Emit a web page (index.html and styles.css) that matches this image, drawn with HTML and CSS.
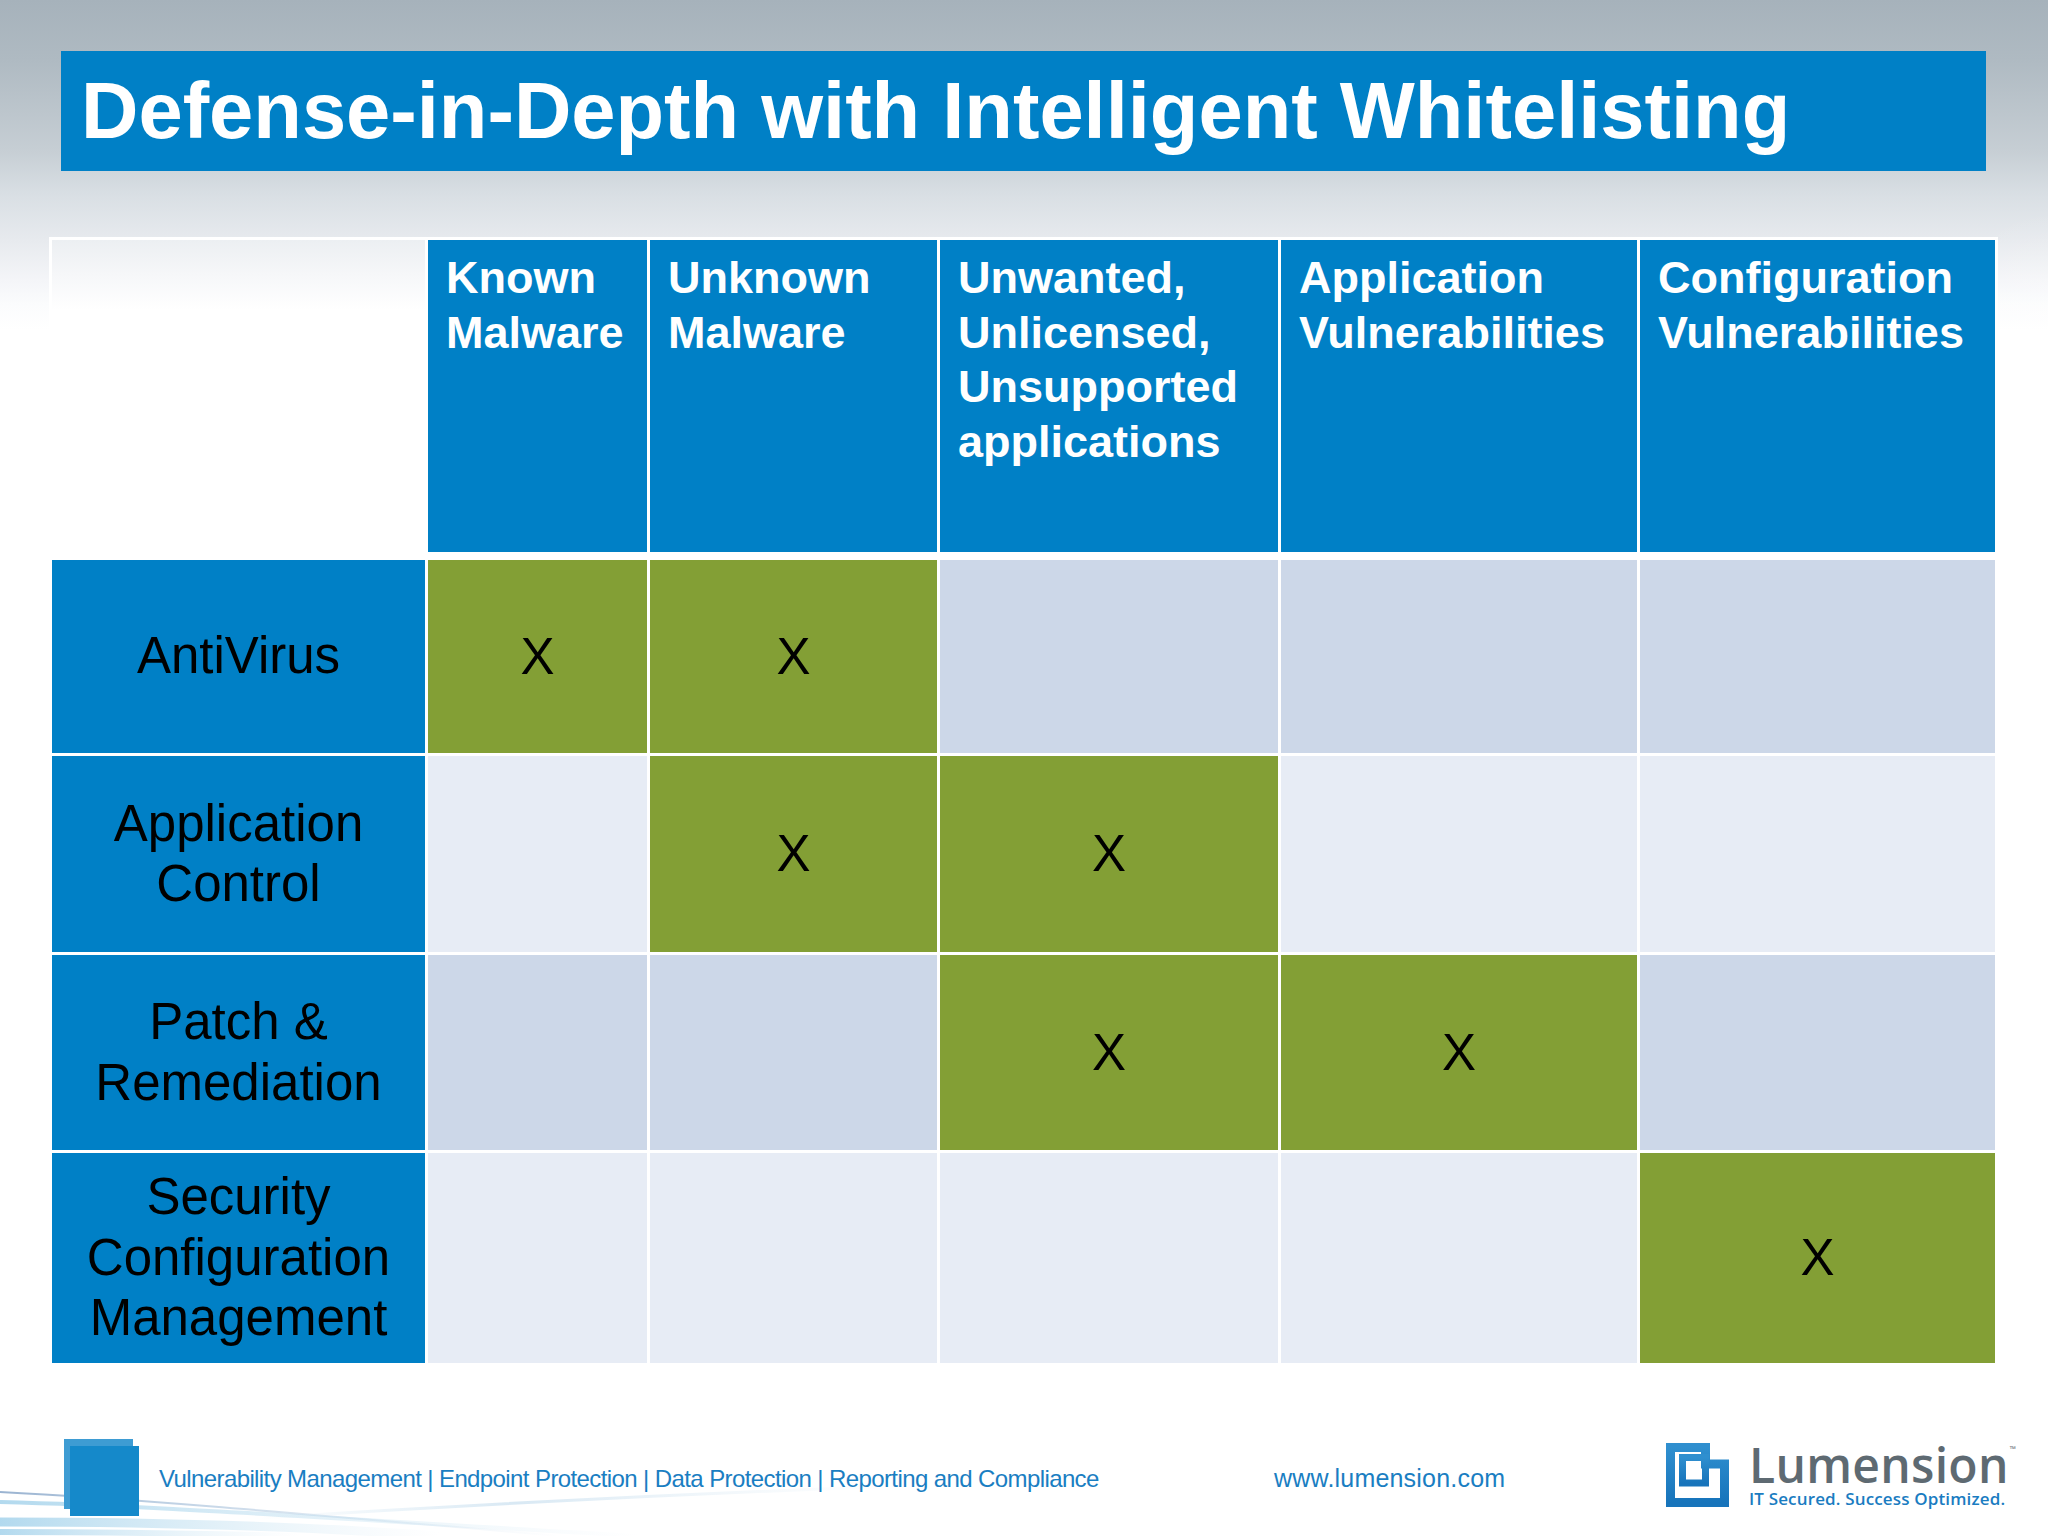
FILE: index.html
```html
<!DOCTYPE html>
<html lang="en">
<head>
<meta charset="utf-8">
<title>Defense-in-Depth with Intelligent Whitelisting</title>
<link rel="stylesheet" href="styles.css">
</head>
<body>
<div class="slide">
  <svg class="swoosh" width="900" height="80" viewBox="0 0 900 80" aria-hidden="true">
    <defs>
      <linearGradient id="sw1" x1="0" y1="0" x2="1" y2="0">
        <stop offset="0" stop-color="#6f93bd" stop-opacity="0.7"/>
        <stop offset="1" stop-color="#9ec3e0" stop-opacity="0"/>
      </linearGradient>
      <linearGradient id="sw2" x1="0" y1="0" x2="1" y2="0">
        <stop offset="0" stop-color="#9fd0ea" stop-opacity="0.8"/>
        <stop offset="1" stop-color="#cfe6f3" stop-opacity="0"/>
      </linearGradient>
      <linearGradient id="sw3" x1="0" y1="0" x2="1" y2="0">
        <stop offset="0" stop-color="#d6e8f3" stop-opacity="0"/>
        <stop offset="0.4" stop-color="#cfe3f1" stop-opacity="0.8"/>
        <stop offset="1" stop-color="#e6f0f7" stop-opacity="0"/>
      </linearGradient>
    </defs>
    <path d="M0 36 C 120 42, 260 54, 560 80" fill="none" stroke="url(#sw1)" stroke-width="2"/>
    <path d="M0 46 C 160 50, 320 62, 640 80" fill="none" stroke="url(#sw2)" stroke-width="4"/>
    <path d="M0 66 C 150 66, 300 70, 440 80" fill="none" stroke="url(#sw2)" stroke-width="9"/>
    <path d="M0 76 C 120 76, 220 78, 300 80" fill="none" stroke="url(#sw2)" stroke-width="6"/>
    <path d="M260 62 C 480 48, 680 38, 900 30" fill="none" stroke="url(#sw3)" stroke-width="3"/>
  </svg>

  <div class="title-bar">
    <h1>Defense-in-Depth with Intelligent Whitelisting</h1>
  </div>

  <div class="matrix">
    <div class="mhead">
      <div class="corner"></div>
      <div class="hcell">Known<br>Malware</div>
      <div class="hcell">Unknown<br>Malware</div>
      <div class="hcell">Unwanted,<br>Unlicensed,<br>Unsupported<br>applications</div>
      <div class="hcell">Application<br>Vulnerabilities</div>
      <div class="hcell">Configuration<br>Vulnerabilities</div>
    </div>
    <div class="mbody">
      <div class="rhead">AntiVirus</div>
      <div class="cell hit">X</div>
      <div class="cell hit">X</div>
      <div class="cell band1"></div>
      <div class="cell band1"></div>
      <div class="cell band1"></div>

      <div class="rhead">Application<br>Control</div>
      <div class="cell band2"></div>
      <div class="cell hit">X</div>
      <div class="cell hit">X</div>
      <div class="cell band2"></div>
      <div class="cell band2"></div>

      <div class="rhead">Patch &amp;<br>Remediation</div>
      <div class="cell band1"></div>
      <div class="cell band1"></div>
      <div class="cell hit">X</div>
      <div class="cell hit">X</div>
      <div class="cell band1"></div>

      <div class="rhead">Security<br>Configuration<br>Management</div>
      <div class="cell band2"></div>
      <div class="cell band2"></div>
      <div class="cell band2"></div>
      <div class="cell band2"></div>
      <div class="cell hit">X</div>
    </div>
  </div>

  <footer class="footer">
    <div class="fbox"></div>
    <div class="ftext">Vulnerability Management | Endpoint Protection | Data Protection | Reporting and Compliance</div>
    <div class="fweb">www.lumension.com</div>
    <div class="flogo">
      <svg class="flogo-icon" width="63" height="64" viewBox="0 0 63 64" aria-hidden="true">
        <defs>
          <linearGradient id="lg" x1="0" y1="0" x2="0" y2="1">
            <stop offset="0" stop-color="#2f8fcf"/>
            <stop offset="1" stop-color="#1774bb"/>
          </linearGradient>
        </defs>
        <path d="M4.5 4.5 H39.5 V21 H58.5 V59.5 H4.5 Z" fill="none" stroke="url(#lg)" stroke-width="9" stroke-linejoin="miter"/>
        <rect x="16.5" y="14.5" width="23" height="25.5" fill="none" stroke="url(#lg)" stroke-width="7"/>
      </svg>
      <div class="flogo-text">
        <div class="brand">Lumension<span class="tm">™</span></div>
        <div class="tagline">IT Secured. Success Optimized.</div>
      </div>
    </div>
  </footer>
</div>
</body>
</html>
```

FILE: styles.css
```css
html, body {
  margin: 0;
  padding: 0;
}

body {
  width: 2048px;
  height: 1536px;
  overflow: hidden;
  font-family: "Liberation Sans", Arial, sans-serif;
  background:
    radial-gradient(ellipse 140px 220px at 100% 28%, rgba(255, 255, 255, 0.55), rgba(255, 255, 255, 0) 100%),
    linear-gradient(180deg, #a6b2bb 0px, #afbac2 60px, #c6ced4 150px, #d9dfe4 195px, #e7eaee 240px, #f4f5f8 280px, #fbfcfd 305px, #ffffff 330px);
}

.slide {
  position: relative;
  width: 2048px;
  height: 1536px;
  display: flex;
  flex-direction: column;
}

/* Title */
.title-bar {
  margin: 51px 0 0 61px;
  width: 1925px;
  height: 120px;
  background: #0080c6;
}

.title-bar h1 {
  margin: 0;
  padding-left: 20px;
  font-size: 79.5px;
  line-height: 120px;
  font-weight: 700;
  color: #ffffff;
  white-space: nowrap;
}

/* Matrix */
.matrix {
  margin: 66px 0 0 49px;
  width: 1949px;
  box-sizing: border-box;
  padding: 3px;
  background: #ffffff;
  display: flex;
  flex-direction: column;
  gap: 8px;
}

.mhead,
.mbody {
  display: grid;
  grid-template-columns: 373px 219px 287px 338px 356px 355px;
  column-gap: 3px;
}

.mhead {
  height: 312px;
}

.mbody {
  grid-template-rows: 193px 196px 195px 210px;
  row-gap: 3px;
}

.corner {
  background: linear-gradient(180deg, #eceff2 0px, #f6f7f9 35px, #ffffff 70px);
}

.hcell {
  background: #0080c6;
  color: #ffffff;
  font-weight: 700;
  font-size: 45px;
  line-height: 54.5px;
  padding: 11px 8px 0 18px;
  white-space: nowrap;
}

.rhead {
  background: #0080c6;
  color: #000000;
  font-size: 51px;
  line-height: 60.5px;
  display: flex;
  align-items: center;
  justify-content: center;
  text-align: center;
}

.cell {
  display: flex;
  align-items: center;
  justify-content: center;
  font-size: 51px;
  line-height: 60px;
  color: #000000;
}

.hit {
  background: #839f35;
}

.band1 {
  background: #ccd7e8;
}

.band2 {
  background: #e7ecf5;
}

/* Footer */
.swoosh {
  position: absolute;
  left: 0;
  bottom: 0;
  z-index: 0;
}

.footer {
  position: relative;
  z-index: 1;
  display: flex;
  align-items: flex-start;
  margin-top: 73px;
  height: 80px;
}

.fbox {
  margin: 7px 0 0 70px;
  width: 69px;
  height: 70px;
  flex: none;
  background: #1589ca;
  box-shadow: -6px -7px 0 #3e9cd3;
}

.ftext {
  margin: 25px 0 0 20px;
  width: 941px;
  flex: none;
  font-size: 24px;
  line-height: 30px;
  letter-spacing: -0.6px;
  color: #1a7ec2;
  white-space: nowrap;
}

.fweb {
  margin: 24px 0 0 174px;
  width: 230px;
  flex: none;
  font-size: 25px;
  line-height: 30px;
  letter-spacing: 0.2px;
  color: #1a7ec2;
  white-space: nowrap;
}

.flogo {
  margin: 4px 0 0 162px;
  display: flex;
  align-items: flex-start;
  gap: 20px;
}

.flogo-icon {
  display: block;
  flex: none;
}

.flogo-text {
  margin-top: -4px;
  display: flex;
  flex-direction: column;
}

.brand {
  font-family: "Open Sans", "Liberation Sans", sans-serif;
  font-weight: 600;
  font-size: 48px;
  line-height: 51px;
  color: #5e6a72;
  white-space: nowrap;
  letter-spacing: 0.3px;
}

.tm {
  font-size: 8px;
  vertical-align: top;
  line-height: 20px;
  margin-left: 1px;
}

.tagline {
  font-family: "Open Sans", "Liberation Sans", sans-serif;
  font-weight: 600;
  font-size: 17px;
  line-height: 18px;
  color: #1a7cc1;
  white-space: nowrap;
  letter-spacing: 0.15px;
}
```
